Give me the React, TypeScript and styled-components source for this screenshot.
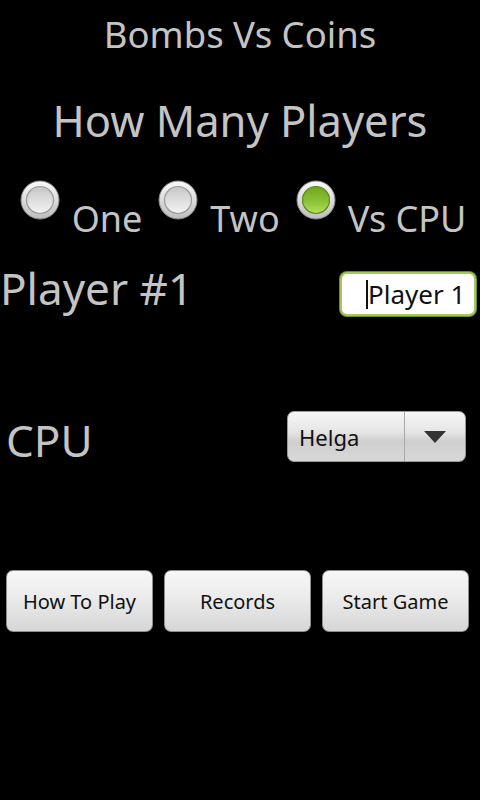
import React from "react";
import styled, { createGlobalStyle } from "styled-components";

const Global = createGlobalStyle`
  html, body { margin: 0; padding: 0; background: #000; }
  body { font-family: "Noto Sans", "Open Sans", sans-serif; }
  #root { width: 480px; height: 800px; background: #000; overflow: hidden; }
`;

const Screen = styled.div`
  width: 480px;
  height: 800px;
  background: #000;
  display: flex;
  flex-direction: column;
  color: #c4c4c4;
`;

const Title = styled.div`
  margin-top: 10px;
  font-size: 36.5px;
  line-height: 48px;
  text-align: center;
`;

const Heading = styled.div`
  margin-top: 31px;
  font-size: 43.5px;
  line-height: 62px;
  text-align: center;
`;

const RadioRow = styled.div`
  margin-top: 29px;
  display: flex;
  justify-content: center;
  gap: 15px;
  height: 63px;
  padding-left: 5px;
`;

const RadioItem = styled.div`
  display: flex;
  align-items: flex-start;
  gap: 11px;
`;

const RadioLabel = styled.span`
  margin-top: 15px;
  font-size: 36px;
  line-height: 48px;
`;

const FieldRow = styled.div<{ $top: number; $indent: number; $right: number }>`
  margin-top: ${(p) => p.$top}px;
  height: 58px;
  display: flex;
  align-items: flex-start;
  justify-content: space-between;
  padding-left: ${(p) => p.$indent}px;
  padding-right: ${(p) => p.$right}px;
`;

const FieldLabel = styled.span`
  font-size: 44px;
  line-height: 58px;
`;

const TextInput = styled.div`
  margin-top: 13px;
  box-sizing: border-box;
  width: 136px;
  height: 44px;
  border-radius: 7px;
  border: 2px solid #a4c85a;
  box-shadow: 0 0 0 1px #6d8d2c;
  background: #fff;
  display: flex;
  align-items: center;
  padding-left: 24px;
  color: #111;
  font-size: 26px;
`;

const Caret = styled.span`
  display: inline-block;
  width: 2px;
  height: 29px;
  background: #111;
`;

const Spinner = styled.div`
  box-sizing: border-box;
  width: 179px;
  height: 51px;
  border-radius: 7px;
  border: 1px solid #9a9a9a;
  background: linear-gradient(#f6f6f6 0%, #e6e6e6 40%, #cfcfcf 60%, #d8d8d8 100%);
  display: flex;
  overflow: hidden;
`;

const SpinnerText = styled.div`
  flex: 1;
  display: flex;
  align-items: center;
  padding-left: 11px;
  font-size: 22px;
  color: #111;
`;

const SpinnerArrow = styled.div`
  width: 60px;
  border-left: 1px solid #a8a8a8;
  display: flex;
  align-items: center;
  justify-content: center;
`;

const ButtonRow = styled.div`
  margin-top: 101px;
  display: grid;
  grid-template-columns: repeat(3, 1fr);
  gap: 11px;
  padding: 0 11px 0 6px;
`;

const Button = styled.div`
  box-sizing: border-box;
  height: 62px;
  border-radius: 7px;
  border: 1px solid #8e8e8e;
  background: linear-gradient(#f7f7f7 0%, #ebebeb 45%, #d6d6d6 100%);
  display: flex;
  align-items: center;
  justify-content: center;
  font-size: 20px;
  color: #111;
`;

function Radio({ checked }: { checked: boolean }) {
  const id = checked ? "on" : "off";
  return (
    <svg width="42" height="40" viewBox="0 0 42 40">
      <defs>
        <linearGradient id={`ring-${id}`} x1="0" y1="0" x2="0" y2="1">
          <stop offset="0" stopColor="#fafafa" />
          <stop offset="1" stopColor="#bdbdbd" />
        </linearGradient>
        <linearGradient id={`fill-${id}`} x1="0" y1="0" x2="0" y2="1">
          {checked ? (
            <>
              <stop offset="0" stopColor="#6ea41c" />
              <stop offset="0.6" stopColor="#8cc63a" />
              <stop offset="1" stopColor="#b4e05a" />
            </>
          ) : (
            <>
              <stop offset="0" stopColor="#c6c6c6" />
              <stop offset="1" stopColor="#f4f4f4" />
            </>
          )}
        </linearGradient>
      </defs>
      <circle cx="21" cy="20" r="19" fill={`url(#ring-${id})`} stroke="#8a8a8a" strokeWidth="1" />
      <circle cx="21" cy="20" r="13.5" fill={`url(#fill-${id})`} stroke={checked ? "#5d8a18" : "#9a9a9a"} strokeWidth="1.2" />
    </svg>
  );
}

export default function App() {
  return (
    <>
      <Global />
      <Screen>
        <Title>Bombs Vs Coins</Title>
        <Heading>How Many Players</Heading>
        <RadioRow>
          <RadioItem>
            <Radio checked={false} />
            <RadioLabel>One</RadioLabel>
          </RadioItem>
          <RadioItem>
            <Radio checked={false} />
            <RadioLabel>Two</RadioLabel>
          </RadioItem>
          <RadioItem>
            <Radio checked={true} />
            <RadioLabel>Vs CPU</RadioLabel>
          </RadioItem>
        </RadioRow>
        <FieldRow $top={16} $indent={0} $right={4}>
          <FieldLabel>Player #1</FieldLabel>
          <TextInput>
            <Caret />
            Player 1
          </TextInput>
        </FieldRow>
        <FieldRow $top={94} $indent={6} $right={14}>
          <FieldLabel>CPU</FieldLabel>
          <Spinner>
            <SpinnerText>Helga</SpinnerText>
            <SpinnerArrow>
              <svg width="22" height="12" viewBox="0 0 22 12">
                <path d="M0 0 L22 0 L11 12 Z" fill="#333" />
              </svg>
            </SpinnerArrow>
          </Spinner>
        </FieldRow>
        <ButtonRow>
          <Button>How To Play</Button>
          <Button>Records</Button>
          <Button>Start Game</Button>
        </ButtonRow>
      </Screen>
    </>
  );
}
